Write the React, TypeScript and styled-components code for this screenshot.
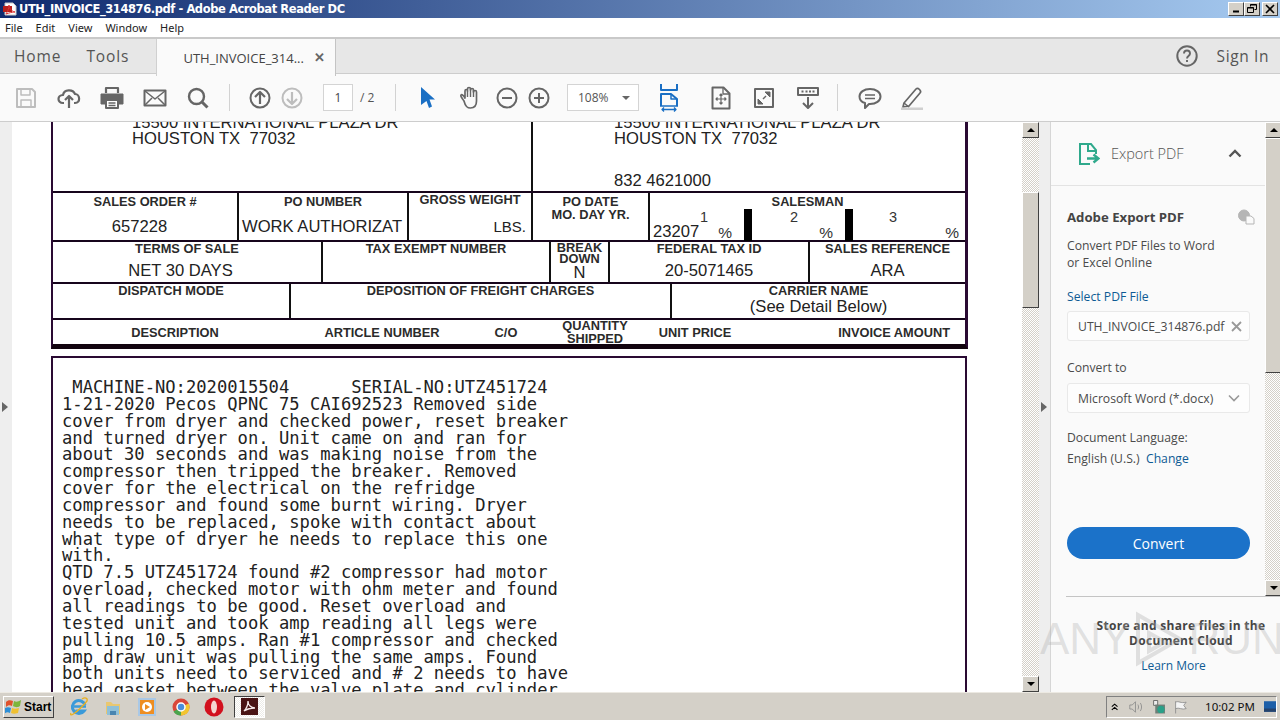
import React, { FC, ReactNode } from 'react'
import styled, { createGlobalStyle } from 'styled-components'

const GlobalStyle = createGlobalStyle`
  html, body {
    margin: 0;
    padding: 0;
    width: 1280px;
    height: 720px;
    overflow: hidden;
    background: #d4d0c8;
  }
  * { box-sizing: border-box; }
`

const Screen = styled.div`
  position: relative;
  display: flex;
  flex-direction: column;
  width: 1280px;
  height: 720px;
  overflow: hidden;
  font-family: 'Open Sans', sans-serif;
`

/* window chrome */
const TitleBar = styled.div`
  display: flex;
  align-items: center;
  height: 18px;
  flex: none;
  padding: 0 2px 0 3px;
  background: linear-gradient(90deg, #0f2a6e 0%, #a6caf0 100%);
`
const TitleText = styled.div`
  flex-grow: 1;
  margin-left: 2px;
  font: bold 11.5px 'DejaVu Sans', sans-serif;
  letter-spacing: -0.42px;
  color: #fff;
  white-space: nowrap;
`
const WinButton = styled.div<{ $gap?: number }>`
  display: flex;
  align-items: center;
  justify-content: center;
  width: 16px;
  height: 14px;
  margin-left: ${(props) => props.$gap ?? 0}px;
  background: #d4d0c8;
  border: 1px solid;
  border-color: #fff #404040 #404040 #fff;
`
const MenuBar = styled.div`
  display: flex;
  align-items: center;
  height: 19px;
  flex: none;
  padding-left: 5px;
  gap: 13px;
  background: #fff;
  font: 11px 'Noto Sans', sans-serif;
  color: #222;
`
const TabRow = styled.div`
  display: flex;
  align-items: stretch;
  height: 37px;
  flex: none;
  background: #e7e7e7;
  border-top: 2px solid #c9c9c9;
  border-bottom: 1px solid #cdcdcd;
`
const NavLink = styled.div<{ $left: number }>`
  align-self: center;
  margin-left: ${(props) => props.$left}px;
  font-size: 15.5px;
  letter-spacing: 0.9px;
  color: #555;
`
const ActiveTab = styled.div`
  display: flex;
  align-items: center;
  width: 180px;
  height: 37px;
  margin-left: 27px;
  padding-left: 26px;
  background: #fafafa;
  border-left: 1px solid #d0d0d0;
  border-right: 1px solid #c4c4c4;
  font-size: 13px;
  color: #444;
  z-index: 1;
`
const TabClose = styled.span`
  margin-left: 10px;
  font: bold 13px 'Liberation Sans', sans-serif;
  color: #666;
`
const Spring = styled.div`
  flex-grow: 1;
`
const SignIn = styled(NavLink)`
  letter-spacing: 0.6px;
  margin-right: 11px;
`
const Toolbar = styled.div`
  display: flex;
  align-items: center;
  height: 48px;
  flex: none;
  padding-left: 4px;
  background: #fafafa;
  border-bottom: 1px solid #cdcdcd;
`
const ToolSlot = styled.div<{ $w?: number }>`
  display: flex;
  align-items: center;
  justify-content: center;
  flex: none;
  width: ${(props) => props.$w ?? 43}px;
`
const ToolSep = styled.div<{ $left: number; $right: number }>`
  width: 1px;
  height: 27px;
  flex: none;
  margin: 0 ${(props) => props.$right}px 0 ${(props) => props.$left}px;
  background: #d2d2d2;
`
const PageBox = styled.div`
  display: flex;
  align-items: center;
  justify-content: center;
  width: 30px;
  height: 27px;
  margin-left: 15px;
  background: #fff;
  border: 1px solid #d4d4d4;
  font-size: 12px;
  color: #444;
`
const PageTotal = styled.div`
  width: 42px;
  padding-left: 7px;
  font-size: 12px;
  color: #555;
  white-space: nowrap;
`
const ZoomBox = styled.div`
  display: flex;
  align-items: center;
  justify-content: space-between;
  width: 72px;
  height: 27px;
  margin-left: 12px;
  padding: 0 8px 0 10px;
  background: #fff;
  border: 1px solid #d4d4d4;
  font-size: 12px;
  color: #555;
`
const Caret = styled.span`
  width: 0;
  height: 0;
  border-left: 4px solid transparent;
  border-right: 4px solid transparent;
  border-top: 4px solid #666;
`

/* main area */
const Main = styled.div`
  display: flex;
  height: 570px;
  flex: none;
`
const SideStrip = styled.div<{ $w: number }>`
  display: flex;
  align-items: center;
  width: ${(props) => props.$w}px;
  flex: none;
  padding-left: 2px;
  padding-bottom: 0;
  background: #eeeeee;
`
const StripArrow = styled.span`
  width: 0;
  height: 0;
  border-top: 5px solid transparent;
  border-bottom: 5px solid transparent;
  border-left: 6px solid #666;
`
const DocArea = styled.div`
  width: 1010px;
  flex: none;
  padding-left: 39px;
  overflow: hidden;
  background: #fff;
`
const Invoice = styled.div`
  width: 917px;
  border-left: 2px solid #2a0a33;
  border-right: 3px solid #2a0a33;
  border-bottom: 5px solid #12040f;
`
const AddressBlock = styled.div`
  display: flex;
  height: 69px;
`
const AddressCell = styled.div<{ $w: number; $pad: number }>`
  width: ${(props) => props.$w}px;
  flex: none;
  padding-left: ${(props) => props.$pad}px;
  font: 16.6px/16px 'Liberation Sans', sans-serif;
  color: #222;
  & + & {
    border-left: 2px solid #111;
  }
`
const AddressLine = styled.div<{ $top?: number }>`
  margin-top: ${(props) => props.$top ?? 0}px;
  white-space: pre;
`
const FormRow = styled.div<{ $h: number }>`
  display: flex;
  height: ${(props) => props.$h}px;
  border-top: 2px solid #17051c;
`
const Cell = styled.div<{ $w?: number }>`
  display: flex;
  flex-direction: column;
  width: ${(props) => (props.$w ? `${props.$w}px` : 'auto')};
  flex: ${(props) => (props.$w ? 'none' : '1')};
  & + & {
    border-left: 2px solid #111;
  }
`
const Label = styled.div<{ $lh?: number; $ml?: number }>`
  font: bold 12.8px/${(props) => props.$lh ?? 13}px 'Liberation Sans', sans-serif;
  margin-left: ${(props) => props.$ml ?? 0}px;
  text-align: center;
  color: #2b2b2b;
  white-space: nowrap;
`
const Value = styled.div<{ $align?: string; $top?: number; $pad?: number }>`
  margin-top: ${(props) => props.$top ?? 0}px;
  padding: 0 ${(props) => props.$pad ?? 0}px;
  font: 16.6px/18px 'Liberation Sans', sans-serif;
  text-align: ${(props) => props.$align ?? 'center'};
  color: #222;
  white-space: pre;
`
const SmallValue = styled(Value)`
  font-size: 15px;
`
const SalesGrid = styled.div`
  display: grid;
  grid-template-columns: 102px 101px 1fr;
  height: 32px;
  margin-top: -1px;
`
const SalesCol = styled.div<{ $bar?: boolean }>`
  display: flex;
  flex-direction: column;
  padding-right: ${(props) => (props.$bar ? 12 : 6)}px;
  border-right: ${(props) => (props.$bar ? '8px solid #000' : 'none')};
`
const SalesNumber = styled.div<{ $shift: number }>`
  margin-left: ${(props) => props.$shift}px;
  font: 14.5px/16px 'Liberation Sans', sans-serif;
  color: #333;
`
const SalesBottom = styled.div`
  display: flex;
  justify-content: space-between;
  font: 15.5px/16px 'Liberation Sans', sans-serif;
  color: #333;
`
const ColumnHead = styled.div<{ $w: number; $align?: string }>`
  display: flex;
  flex-direction: column;
  justify-content: center;
  width: ${(props) => props.$w}px;
  flex: none;
  text-align: ${(props) => props.$align ?? 'center'};
`
const Gap = styled.div`
  height: 7px;
  background: #fff;
`
const BodyFrame = styled.div`
  width: 916px;
  height: 400px;
  padding: 21px 0 0 9px;
  border-top: 2px solid #2a0a33;
  border-left: 2px solid #2a0a33;
  border-right: 2px solid #2a0a33;
  font: 17.17px/16.84px 'DejaVu Sans Mono', monospace;
  color: #222;
  white-space: pre;
`
const Scrollbar = styled.div<{ $h?: number }>`
  display: flex;
  flex-direction: column;
  width: 17px;
  height: ${(props) => (props.$h ? `${props.$h}px` : 'auto')};
  flex: none;
  background: repeating-conic-gradient(#d4d0c8 0 25%, #fff 0 50%) 0 0 / 2px 2px;
`
const ScrollBtn = styled.div`
  display: flex;
  align-items: center;
  justify-content: center;
  height: 16px;
  flex: none;
  background: #d4d0c8;
  border: 1px solid;
  border-color: #fff #404040 #404040 #fff;
`
const ScrollThumb = styled.div<{ $top: number; $h: number }>`
  height: ${(props) => props.$h}px;
  flex: none;
  margin-top: ${(props) => props.$top}px;
  background: #d4d0c8;
  border: 1px solid;
  border-color: #fff #404040 #404040 #fff;
`
const ScrollTrack = styled.div`
  flex-grow: 1;
`
const ArrowUp = styled.span`
  width: 0;
  height: 0;
  border-left: 4px solid transparent;
  border-right: 4px solid transparent;
  border-bottom: 4px solid #000;
`
const ArrowDown = styled.span`
  width: 0;
  height: 0;
  border-left: 4px solid transparent;
  border-right: 4px solid transparent;
  border-top: 4px solid #000;
`

/* right panel */
const Panel = styled.div`
  display: flex;
  flex-direction: column;
  width: 231px;
  flex: none;
  margin-left: -1px;
  background: #fafafa;
  border-left: 1px solid #d6d6d6;
`
const PanelTop = styled.div`
  display: flex;
  height: 474px;
  flex: none;
`
const PanelBody = styled.div`
  width: 214px;
  flex: none;
  overflow: hidden;
`
const ExportHead = styled.div`
  display: flex;
  align-items: center;
  height: 64px;
  padding-left: 27px;
  border-bottom: 1px solid #e3e3e3;
  font-size: 14.5px;
  font-weight: 300;
  color: #555;
`
const ExportTitle = styled.span`
  margin-left: 11px;
  flex-grow: 1;
`
const ExportForm = styled.div`
  padding: 23px 0 0 16px;
  font-size: 12.2px;
  line-height: 17px;
  color: #4b4b4b;
`
const FormTitle = styled.div`
  display: flex;
  justify-content: space-between;
  padding-right: 7px;
  margin-bottom: 11px;
  font-size: 13.2px;
  font-weight: 700;
  color: #444;
`
const FormText = styled.div<{ $top?: number }>`
  margin-top: ${(props) => props.$top ?? 0}px;
  white-space: nowrap;
`
const FormLink = styled.span`
  color: #0e5a94;
`
const FieldBox = styled.div<{ $top: number }>`
  display: flex;
  align-items: center;
  justify-content: space-between;
  width: 183px;
  height: 30px;
  margin-top: ${(props) => props.$top}px;
  padding: 0 7px 0 10px;
  background: #fdfdfd;
  border: 1px solid #e9e9e9;
  border-radius: 3px;
  white-space: nowrap;
`
const ConvertButton = styled.div`
  display: flex;
  align-items: center;
  justify-content: center;
  width: 183px;
  height: 32px;
  margin-top: 60px;
  border-radius: 16px;
  background: #1b72c9;
  font-size: 14px;
  color: #fff;
`
const CloudSection = styled.div`
  flex-grow: 1;
  margin-left: 15px;
  padding: 21px 0 0 15px;
  border-top: 1px solid #c4c4c4;
  text-align: center;
  font-size: 12px;
  line-height: 15px;
  color: #444;
`
const CloudTitle = styled.div`
  font-weight: 700;
  letter-spacing: 0.3px;
  white-space: nowrap;
`
const CloudLink = styled(FormLink)`
  display: block;
  margin-top: 10px;
  margin-left: -15px;
`
const Watermark = styled.div`
  position: absolute;
  left: 1040px;
  top: 611px;
  display: flex;
  align-items: center;
  gap: 5px;
  height: 56px;
  font: 44px/56px 'Liberation Sans', sans-serif;
  color: rgba(170, 170, 170, 0.33);
  pointer-events: none;
`

/* taskbar */
const TaskBar = styled.div`
  display: flex;
  align-items: center;
  height: 28px;
  flex: none;
  padding-left: 3px;
  background: #d4d0c8;
  border-top: 1px solid #ece9e2;
`
const StartButton = styled.div`
  display: flex;
  align-items: center;
  gap: 2px;
  width: 51px;
  height: 22px;
  padding-left: 1px;
  background: #d4d0c8;
  border: 1px solid;
  border-color: #fff #404040 #404040 #fff;
  font: bold 12px 'Liberation Sans', sans-serif;
  color: #000;
`
const QuickSlot = styled.div<{ $left: number }>`
  display: flex;
  align-items: center;
  justify-content: center;
  width: 20px;
  height: 20px;
  margin-left: ${(props) => props.$left}px;
`
const ActiveTask = styled.div`
  display: flex;
  align-items: center;
  justify-content: center;
  width: 31px;
  height: 22px;
  margin-left: 10px;
  background: repeating-conic-gradient(#ecebe7 0 25%, #fff 0 50%) 0 0 / 2px 2px;
  border: 1px solid;
  border-color: #404040 #fff #fff #404040;
`
const Tray = styled.div`
  display: flex;
  align-items: center;
  width: 171px;
  height: 22px;
  margin-right: 3px;
  padding-left: 4px;
  border: 1px solid;
  border-color: #808080 #fff #fff #808080;
  font: 11.5px 'Noto Sans', sans-serif;
  color: #111;
`
const Clock = styled.span`
  margin-left: 16px;
  margin-right: 9px;
  white-space: nowrap;
`

const Ic: FC<{ s?: number; w?: number; h?: number; vb?: string; children: ReactNode }> = ({
  s = 24,
  w,
  h,
  vb,
  children
}) => (
  <svg
    width={w ?? s}
    height={h ?? s}
    viewBox={vb ?? `0 0 ${w ?? s} ${h ?? s}`}
    fill="none"
    stroke="#666"
    strokeWidth={2}
    strokeLinejoin="round"
  >
    {children}
  </svg>
)

const bodyLines = [
  ' MACHINE-NO:2020015504      SERIAL-NO:UTZ451724',
  '1-21-2020 Pecos QPNC 75 CAI692523 Removed side',
  'cover from dryer and checked power, reset breaker',
  'and turned dryer on. Unit came on and ran for',
  'about 30 seconds and was making noise from the',
  'compressor then tripped the breaker. Removed',
  'cover for the electrical on the refridge',
  'compressor and found some burnt wiring. Dryer',
  'needs to be replaced, spoke with contact about',
  'what type of dryer he needs to replace this one',
  'with.',
  'QTD 7.5 UTZ451724 found #2 compressor had motor',
  'overload, checked motor with ohm meter and found',
  'all readings to be good. Reset overload and',
  'tested unit and took amp reading all legs were',
  'pulling 10.5 amps. Ran #1 compressor and checked',
  'amp draw unit was pulling the same amps. Found',
  'both units need to serviced and # 2 needs to have',
  'head gasket between the valve plate and cylinder'
]

const App: FC = () => {
  return (
    <Screen>
      <GlobalStyle />
      <TitleBar>
        <Ic s={14}>
          <path d="M2 1h8l3 3v9H2z" fill="#fff" stroke="#c8c8c8" strokeWidth={1} />
          <path d="M0 4h9v6H0z" fill="#b8201c" stroke="none" />
          <path d="M3 12c2-3 3-6 3-9 0 3 2 6 6 7-3 0-6 1-9 2z" stroke="#d33" strokeWidth={1} />
        </Ic>
        <TitleText>UTH_INVOICE_314876.pdf - Adobe Acrobat Reader DC</TitleText>
        <WinButton>
          <svg width={8} height={8}><path d="M1 6.5h6" stroke="#000" strokeWidth={2} /></svg>
        </WinButton>
        <WinButton>
          <svg width={10} height={10} fill="none" stroke="#000">
            <path d="M3.5 2.5V.5h6v5h-2M.5 3.5h6v5h-6z" />
            <path d="M3.5 1h6M.5 4h6" strokeWidth={1} />
          </svg>
        </WinButton>
        <WinButton $gap={2}>
          <svg width={10} height={10} stroke="#000" strokeWidth={1.6}><path d="M1 1l8 8M9 1l-8 8" /></svg>
        </WinButton>
      </TitleBar>

      <MenuBar>
        <span>File</span>
        <span>Edit</span>
        <span>View</span>
        <span>Window</span>
        <span>Help</span>
      </MenuBar>

      <TabRow>
        <NavLink $left={14}>Home</NavLink>
        <NavLink $left={25}>Tools</NavLink>
        <ActiveTab>
          UTH_INVOICE_314...
          <TabClose>✕</TabClose>
        </ActiveTab>
        <Spring />
        <svg width={24} height={24} viewBox="0 0 24 24" fill="none" style={{ alignSelf: 'center', marginRight: 18 }}>
          <circle cx={12} cy={12} r={9.7} stroke="#666" strokeWidth={2} />
          <path d="M9 9.5c0-4 6-4 6 0 0 2.5-3 2.500-3 5M12 16v2" stroke="#666" strokeWidth={1.9} />
        </svg>
        <SignIn $left={0}>Sign In</SignIn>
      </TabRow>

      <Toolbar>
        <ToolSlot>
          <Ic s={22}>
            <g stroke="#bdbdbd">
              <path d="M2 2h15l3 3v15H2z" />
              <path d="M6 2v6h9V2M6 20v-7h10v7" strokeWidth={1.5} />
            </g>
          </Ic>
        </ToolSlot>
        <ToolSlot>
          <Ic w={24} h={22}>
            <path d="M7 16H6c-6 0-6-8 0-8 1-6 10-6 12-1 5 0 6 9 0 9h-1" strokeWidth={2.2} />
            <path d="M12 21V9M8 13l4-4 4 4" strokeWidth={2.2} />
          </Ic>
        </ToolSlot>
        <ToolSlot>
          <Ic s={24}>
            <path d="M6 7V2h12v5" strokeWidth={2.2} />
            <path d="M1 8h22v10h-4v-4H5v4H1z" fill="#666" stroke="#666" strokeWidth={1} />
            <path d="M6 14h12v8H6z" strokeWidth={2} fill="#fff" />
            <path d="M8.500 17h7M8.500 19.500h7" strokeWidth={1.300} />
          </Ic>
        </ToolSlot>
        <ToolSlot>
          <Ic w={24} h={18}>
            <path d="M1.500 1.500h21v15h-21z" />
            <path d="M2 2l10 8 10-8M2 16l7-7M22 16l-7-7" strokeWidth={1.500} />
          </Ic>
        </ToolSlot>
        <ToolSlot>
          <Ic s={22}>
            <circle cx={9.500} cy={9.500} r={7.500} strokeWidth={2.400} />
            <path d="M15 15l5.500 5.500" strokeWidth={3} />
          </Ic>
        </ToolSlot>
        <ToolSep $left={10} $right={14} />
        <ToolSlot $w={32}>
          <Ic s={22}>
            <circle cx={11} cy={11} r={9.500} />
            <path d="M11 17V5M6 10l5-5 5 5" strokeWidth={2.200} />
          </Ic>
        </ToolSlot>
        <ToolSlot $w={32}>
          <Ic s={22}>
            <g stroke="#bdbdbd">
              <circle cx={11} cy={11} r={9.500} />
              <path d="M11 5v12M6 12l5 5 5-5" strokeWidth={2.200} />
            </g>
          </Ic>
        </ToolSlot>
        <PageBox>1</PageBox>
        <PageTotal>/ 2</PageTotal>
        <ToolSep $left={0} $right={11} />
        <ToolSlot $w={42}>
          <svg width={14} height={22} viewBox="0 0 14 22">
            <path d="M0 0l14 12.500H8.500l2.500 7-3 1.500-2.500-7L0 18z" fill="#1a6fc4" />
          </svg>
        </ToolSlot>
        <ToolSlot $w={42}>
          <Ic w={24} h={24}>
            <path
              d="M6 15c-2-3-4-5-3-6s3 1 4 3V5c0-2 2.500-2 2.500 0V3c0-2 3-2 3 0v1c0-2 3-2 3 0v2c0-2 3-2 3 0v9c0 4-2 7-6 7-3 0-5-1-6.500-7z"
              strokeWidth={1.700}
            />
            <path d="M9.500 5v6M12.500 3v8M15.500 4v7" strokeWidth={1.400} />
          </Ic>
        </ToolSlot>
        <ToolSlot $w={32}>
          <Ic s={22}>
            <circle cx={11} cy={11} r={9.500} />
            <path d="M6 11h10" />
          </Ic>
        </ToolSlot>
        <ToolSlot $w={32}>
          <Ic s={22}>
            <circle cx={11} cy={11} r={9.500} />
            <path d="M6 11h10M11 6v10" />
          </Ic>
        </ToolSlot>
        <ZoomBox>
          108%
          <Caret />
        </ZoomBox>
        <ToolSlot $w={60}>
          <Ic w={20} h={28}>
            <g stroke="#1a6fc4">
              <path d="M2 0v6h16V0M1.500 9h-0" strokeWidth={2} />
              <path d="M2 22v-12h10l6 5v7" strokeWidth={2} />
              <path d="M12 10v5h6M1 22h18" strokeWidth={1.500} />
              <path d="M3 25.500h14M5 23.500l-2 2 2 2M15 23.500l2 2-2 2" strokeWidth={1.300} />
            </g>
          </Ic>
        </ToolSlot>
        <ToolSlot>
          <Ic w={20} h={24}>
            <path d="M1.500 1.500h11l6 6v15h-17z" strokeWidth={2} />
            <path d="M12 2v6h6" strokeWidth={1.300} />
            <path d="M10 8v10M5 13h10M8.500 9.500L10 8l1.500 1.500M8.500 16.500L10 18l1.500-1.500M6.500 11.500L5 13l1.500 1.500M13.500 11.500L15 13l-1.500 1.500" strokeWidth={1.200} />
          </Ic>
        </ToolSlot>
        <ToolSlot $w={44}>
          <Ic s={20}>
            <path d="M1 1h18v18H1z" strokeWidth={2} />
            <path d="M11 4h5v5zM9 16H4v-5z" fill="#666" strokeWidth={1} />
            <path d="M9 11l3-3" strokeWidth={1.500} />
          </Ic>
        </ToolSlot>
        <ToolSlot>
          <Ic w={22} h={22}>
            <path d="M1 1h20v7H1z" strokeWidth={2} />
            <path d="M4.500 4.500h2M8.500 4.500h2M12 4.500h2M15.500 4.500h2" strokeWidth={2} />
            <path d="M11 10v11M6 16l5 5 5-5" strokeWidth={2} />
          </Ic>
        </ToolSlot>
        <ToolSep $left={8} $right={15} />
        <ToolSlot $w={42} style={{ width: 34 }}>
          <Ic w={24} h={22}>
            <path d="M12 2c6 0 10.500 3 10.500 7.500S18 17 12 17h-1l-4 4v-5C3 15 1.500 12 1.500 9.500 1.500 5 6 2 12 2z" />
            <path d="M7 8h10M7 11.500h10" strokeWidth={1.400} />
          </Ic>
        </ToolSlot>
        <ToolSlot $w={50}>
          <Ic s={24}>
            <path d="M4 17L16 3c2-2 6 2 4 4L9 20l-6 1z" strokeWidth={1.700} />
            <path d="M1 23h22" stroke="#cfcfcf" strokeWidth={3} />
            <path d="M4 17l5 4" strokeWidth={1.500} />
          </Ic>
        </ToolSlot>
      </Toolbar>

      <Main>
        <SideStrip $w={12}>
          <StripArrow />
        </SideStrip>
        <DocArea>
          <Invoice>
            <AddressBlock>
              <AddressCell $w={478} $pad={79}>
                <AddressLine $top={-7}>15500 INTERNATIONAL PLAZA DR</AddressLine>
                <AddressLine>HOUSTON TX  77032</AddressLine>
              </AddressCell>
              <AddressCell $w={434} $pad={81}>
                <AddressLine $top={-7}>15500 INTERNATIONAL PLAZA DR</AddressLine>
                <AddressLine>HOUSTON TX  77032</AddressLine>
                <AddressLine $top={26}>832 4621000</AddressLine>
              </AddressCell>
            </AddressBlock>
            <FormRow $h={49}>
              <Cell $w={184}>
                <Label $lh={17}>SALES ORDER #</Label>
                <Value $top={8} style={{ marginRight: 11 }}>657228</Value>
              </Cell>
              <Cell $w={170}>
                <Label $lh={17}>PO NUMBER</Label>
                <Value $top={8} $align="left" $pad={3}>WORK AUTHORIZAT</Value>
              </Cell>
              <Cell $w={124}>
                <Label $lh={14}>GROSS WEIGHT</Label>
                <SmallValue $top={11} $align="right" $pad={5}>LBS.</SmallValue>
              </Cell>
              <Cell $w={117}>
                <Label $lh={14} style={{ marginTop: 2 }}>PO DATE</Label>
                <Label $lh={12}>MO.  DAY  YR.</Label>
              </Cell>
              <Cell>
                <Label $lh={17}>SALESMAN</Label>
                <SalesGrid>
                  <SalesCol $bar>
                    <SalesNumber $shift={50}>1</SalesNumber>
                    <SalesBottom>
                      <Value $top={-2} $pad={3}>23207</Value>
                      <span>%</span>
                    </SalesBottom>
                  </SalesCol>
                  <SalesCol $bar>
                    <SalesNumber $shift={38}>2</SalesNumber>
                    <SalesBottom>
                      <span />
                      <span>%</span>
                    </SalesBottom>
                  </SalesCol>
                  <SalesCol>
                    <SalesNumber $shift={36}>3</SalesNumber>
                    <SalesBottom>
                      <span />
                      <span>%</span>
                    </SalesBottom>
                  </SalesCol>
                </SalesGrid>
              </Cell>
            </FormRow>
            <FormRow $h={42}>
              <Cell $w={268}>
                <Label $lh={13}>TERMS OF SALE</Label>
                <Value $top={7} style={{ marginRight: 13 }}>NET 30 DAYS</Value>
              </Cell>
              <Cell $w={228}>
                <Label $lh={13}>TAX EXEMPT NUMBER</Label>
              </Cell>
              <Cell $w={59}>
                <Label $lh={11}>BREAK</Label>
                <Label $lh={11}>DOWN</Label>
                <Value>N</Value>
              </Cell>
              <Cell $w={200}>
                <Label $lh={13}>FEDERAL TAX ID</Label>
                <Value $top={7}>20-5071465</Value>
              </Cell>
              <Cell>
                <Label $lh={13}>SALES REFERENCE</Label>
                <Value $top={7}>ARA</Value>
              </Cell>
            </FormRow>
            <FormRow $h={36}>
              <Cell $w={236}>
                <Label $lh={13}>DISPATCH MODE</Label>
              </Cell>
              <Cell $w={381}>
                <Label $lh={13}>DEPOSITION OF FREIGHT CHARGES</Label>
              </Cell>
              <Cell>
                <Label $lh={13}>CARRIER NAME</Label>
                <Value $top={1}>(See Detail Below)</Value>
              </Cell>
            </FormRow>
            <FormRow $h={26}>
              <ColumnHead $w={244}><Label>DESCRIPTION</Label></ColumnHead>
              <ColumnHead $w={170}><Label>ARTICLE NUMBER</Label></ColumnHead>
              <ColumnHead $w={78}><Label>C/O</Label></ColumnHead>
              <ColumnHead $w={100}>
                <Label $lh={13}>QUANTITY</Label>
                <Label $lh={13}>SHIPPED</Label>
              </ColumnHead>
              <ColumnHead $w={100}><Label>UNIT PRICE</Label></ColumnHead>
              <ColumnHead $w={212} $align="right"><Label style={{ textAlign: 'right', marginRight: 7 }}>INVOICE AMOUNT</Label></ColumnHead>
            </FormRow>
          </Invoice>
          <Gap />
          <BodyFrame>{bodyLines.join('\n')}</BodyFrame>
        </DocArea>
        <Scrollbar>
          <ScrollBtn><ArrowUp /></ScrollBtn>
          <ScrollThumb $top={54} $h={116} />
          <ScrollTrack />
          <ScrollBtn><ArrowDown /></ScrollBtn>
        </Scrollbar>
        <SideStrip $w={12}>
          <StripArrow />
        </SideStrip>
        <Panel>
          <PanelTop>
            <PanelBody>
              <ExportHead>
                <svg width={22} height={22} viewBox="0 0 22 22" fill="none" stroke="#2fa98c" strokeWidth={2}>
                  <path d="M12 1H2v20h10" />
                  <path d="M10 1h3l5 6v4M10 2v6h7" />
                  <path d="M9 15.500h10M15.500 11.500l5 4-5 4" strokeWidth={2.400} />
                </svg>
                <ExportTitle>Export PDF</ExportTitle>
                <svg width={14} height={9} viewBox="0 0 14 9" fill="none" stroke="#555" strokeWidth={2.400} style={{ marginRight: 23 }}>
                  <path d="M1.500 7.500L7 2l5.500 5.500" />
                </svg>
              </ExportHead>
              <ExportForm>
                <FormTitle>
                  Adobe Export PDF
                  <svg width={18} height={16} viewBox="0 0 18 16" fill="#b5b5b5" stroke="#b5b5b5" strokeWidth={1} style={{ marginRight: 3 }}>
                    <circle cx={7} cy={6.500} r={5.500} />
                    <path d="M9 7h5l3 2.500V15H9z" fill="#fafafa" />
                  </svg>
                </FormTitle>
                <FormText>Convert PDF Files to Word</FormText>
                <FormText>or Excel Online</FormText>
                <FormText $top={17}><FormLink>Select PDF File</FormLink></FormText>
                <FieldBox $top={6}>
                  UTH_INVOICE_314876.pdf
                  <svg width={11} height={11} viewBox="0 0 11 11" stroke="#999" strokeWidth={1.800} style={{ flex: 'none' }}>
                    <path d="M1 1l9 9M10 1l-9 9" />
                  </svg>
                </FieldBox>
                <FormText $top={18}>Convert to</FormText>
                <FieldBox $top={7}>
                  Microsoft Word (*.docx)
                  <svg width={12} height={8} viewBox="0 0 12 8" fill="none" stroke="#999" strokeWidth={1.600} style={{ flex: 'none', marginRight: 2 }}>
                    <path d="M1 1.500l5 5 5-5" />
                  </svg>
                </FieldBox>
                <FormText $top={16}>Document Language:</FormText>
                <FormText $top={4}>English (U.S.)&nbsp; <FormLink>Change</FormLink></FormText>
                <ConvertButton>Convert</ConvertButton>
              </ExportForm>
            </PanelBody>
            <Scrollbar>
              <ScrollBtn><ArrowUp /></ScrollBtn>
              <ScrollThumb $h={235} $top={0} />
              <ScrollTrack />
              <ScrollBtn><ArrowDown /></ScrollBtn>
            </Scrollbar>
          </PanelTop>
          <CloudSection>
            <CloudTitle>Store and share files in the</CloudTitle>
            <CloudTitle>Document Cloud</CloudTitle>
            <CloudLink>Learn More</CloudLink>
          </CloudSection>
        </Panel>
      </Main>

      <TaskBar>
        <StartButton>
          <svg width={17} height={16} viewBox="0 0 17 16">
            <path d="M1 3c2-2 4-2 7-1l-1 5c-2-1-4-1-6 1z" fill="#e0522c" />
            <path d="M9 2c2 1 4 1 7-1l-1 6c-3 2-5 1-7 0z" fill="#7db53c" />
            <path d="M0 9c2-1 4-1 6 0l-1 5c-2-1-4-1-6 1z" fill="#2c8ed6" />
            <path d="M7 9c2 1 4 1 7 0l-1 5c-3 1-5 1-7 0z" fill="#f0c030" />
          </svg>
          Start
        </StartButton>
        <QuickSlot $left={15}>
          <svg width={20} height={20} viewBox="0 0 20 20" fill="none">
            <path d="M16 8A6.500 6.500 0 1 0 15 14H6.500" stroke="#3a9ad9" strokeWidth={3} />
            <path d="M5 9.500h12" stroke="#3a9ad9" strokeWidth={2.500} />
            <path d="M2 16C0 20 6 18 18 4c1-3-2-4-5-2" stroke="#e8b020" strokeWidth={1.300} />
          </svg>
        </QuickSlot>
        <QuickSlot $left={14}>
          <svg width={18} height={18} viewBox="0 0 18 18">
            <path d="M2 4h5l2 2h7v10H2z" fill="#e9c770" />
            <path d="M3 8h12v9H3z" fill="#8fc0d8" />
            <path d="M6 13h6v4H6z" fill="#4a86b0" />
          </svg>
        </QuickSlot>
        <QuickSlot $left={14}>
          <svg width={18} height={18} viewBox="0 0 18 18">
            <path d="M0 0h18v18H0z" fill="#a9c8e6" />
            <path d="M2 2h14v14H2z" fill="#ee8e22" />
            <circle cx={9} cy={9} r={5} fill="#fff" />
            <path d="M7 6l5 3-5 3z" fill="#ee8e22" />
          </svg>
        </QuickSlot>
        <QuickSlot $left={14}>
          <svg width={18} height={18} viewBox="0 0 18 18">
            <circle cx={9} cy={9} r={8.500} fill="#d9473a" />
            <path d="M9 9L1.500 13.500A8.500 8.500 0 0 0 9 17.500z" fill="#4aa54d" />
            <path d="M9 9l7.800-3.500A8.500 8.500 0 0 1 9 17.500z" fill="#f2c530" />
            <circle cx={9} cy={9} r={4} fill="#4a8ddc" stroke="#fff" strokeWidth={1.500} />
          </svg>
        </QuickSlot>
        <QuickSlot $left={13}>
          <svg width={20} height={20} viewBox="0 0 20 20" fill="none">
            <circle cx={10} cy={10} r={9.500} fill="#d2101e" />
            <ellipse cx={10} cy={10} rx={3} ry={6.500} fill="#f4d5d0" />
          </svg>
        </QuickSlot>
        <ActiveTask>
          <svg width={17} height={17} viewBox="0 0 17 17" fill="none">
            <path d="M0 0h17v17H0z" fill="#4a1414" />
            <path d="M3 13c3-3 4-6 4-10 0 4 3 7 7 7-4 0-8 1-11 3z" stroke="#f4e8e8" strokeWidth={1.300} />
          </svg>
        </ActiveTask>
        <Spring />
        <Tray>
          <svg width={9} height={10} viewBox="0 0 9 10" fill="none" stroke="#000" strokeWidth={1.400}>
            <path d="M1 4.500l3.500-3 3.500 3M1 8.500l3.500-3 3.500 3" />
          </svg>
          <svg width={18} height={16} viewBox="0 0 18 16" fill="none" stroke="#888" style={{ marginLeft: 11 }}>
            <path d="M1 5.500h3L8 1.500v13L4 10.500H1zM11 5c1 2 1 4 0 6M14 3c2 3 2 7 0 10" />
          </svg>
          <svg width={18} height={18} viewBox="0 0 18 18" style={{ marginLeft: 8 }}>
            <path d="M2 1h5v6H2z" fill="#eee" stroke="#555" />
            <path d="M4 6h12v11H4z" fill="#6f7f78" />
            <circle cx={11} cy={12} r={4.500} fill="#2aa088" />
          </svg>
          <svg width={18} height={16} viewBox="0 0 18 16" fill="#f4f4f4" stroke="#888" style={{ marginLeft: 8 }}>
            <path d="M2 1v15M2 2c4-2 6 2 13 0l-3 4 3 4c-5 2-9-2-13 0" />
          </svg>
          <Clock>10:02 PM</Clock>
          <svg width={15} height={13} viewBox="0 0 15 13">
            <path d="M0 0h15v13H0z" fill="#1d5fa8" />
            <path d="M0 9h15v4H0z" fill="#25436c" />
          </svg>
        </Tray>
      </TaskBar>

      <Watermark>
        ANY
        <svg width={48} height={56} viewBox="0 0 48 56" fill="none" stroke="rgba(170,170,170,0.33)" strokeWidth={4}>
          <path d="M3 4l42 24L3 52zM14 22l16 9-16 9z" />
        </svg>
        RUN
      </Watermark>
    </Screen>
  )
}

export default App
